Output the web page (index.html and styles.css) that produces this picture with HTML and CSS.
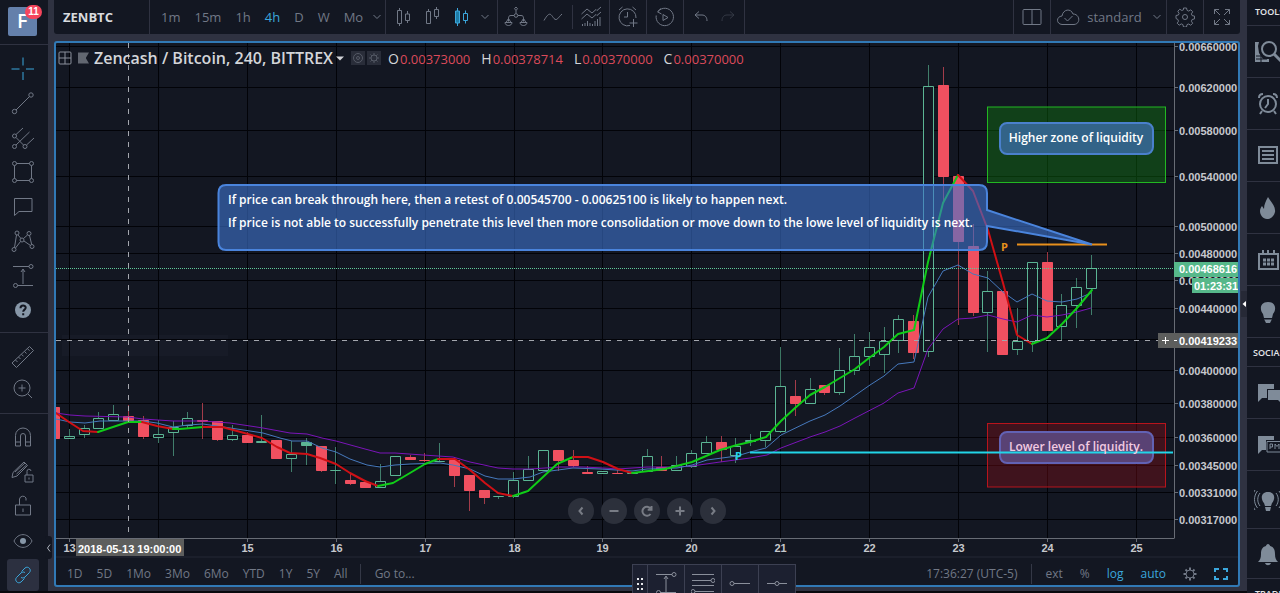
FILE: index.html
```html
<!DOCTYPE html>
<html lang="en">
<head>
<meta charset="utf-8">
<title>ZENBTC</title>
<link rel="stylesheet" href="styles.css">
</head>
<body>
<div class="app">
  <nav class="rail" aria-label="Drawing tools">
    <div class="rail-logo"><a class="logo" href="#">F</a><span class="badge">11</span></div>
    <div class="rail-group group-draw">
      <button class="tool active" aria-label="Crosshair"><svg class="ico" viewBox="0 0 24 24"><path d="M12 .5v8M12 15v8M.500 12h8M15 12h8"/></svg></button>
      <button class="tool" aria-label="Trend line"><svg class="ico" viewBox="0 0 24 24"><circle cx="3.500" cy="20.500" r="2.200"/><circle cx="20" cy="4" r="2.200"/><path d="M5 19L18.500 5.500"/></svg></button>
      <button class="tool" aria-label="Pitchfork"><svg class="ico" viewBox="0 0 24 24"><circle cx="3.500" cy="10" r="2"/><circle cx="3.500" cy="20.500" r="2"/><circle cx="14" cy="20.500" r="2"/><path d="M5 8.500L12 2M5 19L18.500 6M5 11.500l7.500 7.500M15.500 19L23 12"/></svg></button>
      <button class="tool" aria-label="Rectangle"><svg class="ico" viewBox="0 0 24 24"><circle cx="3.500" cy="3.500" r="2"/><circle cx="20.500" cy="3.500" r="2"/><circle cx="3.500" cy="20.500" r="2"/><circle cx="20.500" cy="20.500" r="2"/><path d="M5.500 3.500h13M5.500 20.500h13M3.500 5.500v13M20.500 5.500v13"/></svg></button>
      <button class="tool" aria-label="Text"><svg class="ico" viewBox="0 0 24 24"><path d="M3.500 3.500h17.500v13H8L3.500 20.500z"/></svg></button>
      <button class="tool" aria-label="Patterns"><svg class="ico" viewBox="0 0 24 24"><circle cx="6" cy="4" r="2"/><circle cx="18" cy="4.500" r="2"/><circle cx="11" cy="11" r="2"/><circle cx="3" cy="20.500" r="2"/><circle cx="21" cy="17.500" r="2"/><path d="M5.500 6L3.500 18.500M7 6l2.800 3.300M16.500 6L12.500 9.500M18.500 6.500l2.200 9M13 12l6.500 4.500M9.500 12.500L4.500 19"/></svg></button>
      <button class="tool" aria-label="Measure position"><svg class="ico" viewBox="0 0 24 24"><circle cx="20" cy="2.500" r="2"/><circle cx="4.500" cy="21.500" r="2"/><path d="M2 2.500h16M6.500 21.500H22M12 20V6M10 8l2-3 2 3"/></svg></button>
      <button class="tool" aria-label="Help"><svg class="ico" viewBox="0 0 24 24"><circle class="solid" cx="12" cy="12" r="8"/><path class="cut" d="M9.500 10.200c0-3.500 5.200-3.300 5.200-.4 0 1.800-2.500 1.900-2.500 3.900M12.200 15.200v2"/></svg></button>
    </div>
    <div class="rail-group group-measure">
      <button class="tool" aria-label="Ruler"><svg class="ico" viewBox="0 0 24 24"><path d="M1 18L18.500 1.500l4 4L5.500 22.500zM4.500 15l2 2M7.500 12l2 2M10.500 9.300l2 2M13.500 6.500l2 2M16.500 3.700l2 2"/></svg></button>
      <button class="tool" aria-label="Zoom in"><svg class="ico" viewBox="0 0 24 24"><circle cx="11" cy="11" r="8"/><path d="M17 17l4 4M11 7.500v7M7.500 11h7"/></svg></button>
    </div>
    <div class="rail-group group-lock">
      <button class="tool" aria-label="Magnet"><svg class="ico" viewBox="0 0 24 24"><path d="M4.500 21V10.500a7.500 7.500 0 0 1 15 0V21h-5V11a2.500 2.500 0 0 0-5 0v10zM4.500 17h5M14.500 17h5"/></svg></button>
      <button class="tool" aria-label="Stay in drawing mode"><svg class="ico" viewBox="0 0 24 24"><path d="M2 12.500L13 2l3.500 3.500L6 16l-5 1.500zM4 12l10-9M5.500 14l10-9M14 15h8v7h-8zM16 15v-3.500a2 2 0 0 1 4-.5M18 17.500v2"/></svg></button>
      <button class="tool" aria-label="Lock drawings"><svg class="ico" viewBox="0 0 24 24"><path d="M4.500 11h15v10h-15zM8.500 11V5a3.500 3.500 0 0 1 6.500-1v2.500M12 14.500v3.500"/></svg></button>
      <button class="tool" aria-label="Hide drawings"><svg class="ico" viewBox="0 0 24 24"><path d="M3 12c4-8.500 14-8.500 18 0-4 8.500-14 8.500-18 0z"/><circle class="solid" cx="12" cy="12" r="3"/></svg></button>
      <button class="tool pressed" aria-label="Sync drawings"><svg class="ico" viewBox="0 0 24 24"><path d="M10.500 8.500l3.500-3.500c3-2.500 7 1.500 4.500 4.500l-4.500 4.500c-1.300 1.300-3 1.300-4 .3M13.500 15.500L10 19c-3 2.500-7-1.500-4.500-4.500L10 10c1.300-1.300 3-1.300 4-.3"/></svg></button>
    </div>
    <button class="handle handle-left" aria-label="Collapse tools"><svg viewBox="0 0 6 10"><path d="M4 1.500L1.500 5 4 8.500"/></svg></button>
  </nav>

  <main class="main">
    <header class="topbar">
      <div class="seg seg-symbol"><button class="symbol">ZENBTC</button></div>
      <div class="seg seg-intervals">
        <button>1m</button><button>15m</button><button>1h</button><button class="on">4h</button><button>D</button><button>W</button><button>Mo</button>
        <button class="more" aria-label="More intervals"><svg class="chev" viewBox="0 0 8 6"><path d="M.5 1L4 4.500 7.500 1"/></svg></button>
      </div>
      <div class="seg seg-style">
        <button aria-label="Candles"><svg class="ico20" viewBox="0 0 20 20"><path d="M3.500 3.500h4v13h-4zM5.500 1v2.500M5.500 16.500V19M11.500 7h4v6.500h-4zM13.500 4v3M13.500 13.500V16"/></svg></button>
        <button aria-label="Hollow candles"><svg class="ico20" viewBox="0 0 20 20"><path d="M3.500 4.500h4v12h-4zM5.500 2v2.500M11.500 2.500h4v7h-4zM13.500 0v2.500M13.500 9.500V12"/></svg></button>
        <button class="on" aria-label="Filled candles"><svg class="ico20" viewBox="0 0 20 20"><path class="fill" d="M3.500 4h4v12h-4z"/><path d="M5.500 1v3M5.500 16v3M11.500 6.500h4v7h-4zM13.500 3.500v3M13.500 13.500v3"/></svg></button>
        <button aria-label="More styles"><svg class="chev" viewBox="0 0 8 6"><path d="M.5 1L4 4.500 7.500 1"/></svg></button>
      </div>
      <div class="seg"><button aria-label="Compare"><svg class="ico24" viewBox="0 0 24 24"><circle cx="12" cy="10.500" r="1.800"/><path d="M12 8.500V5.500M12 2l1.500 1.700L12 5.500l-1.500-1.800zM10 10.500H7c-2 0-2.500 1-2.500 3v3M14 10.500h3c2 0 2.500 1 2.500 3v3M1 17.500h7c0 4-7 4-7 0zM16 17.500h7c0 4-7 4-7 0zM4.500 13.500L2 17.500M4.500 13.500l2.500 4M19.500 13.500l-2.500 4M19.500 13.500l2.500 4"/></svg></button></div>
      <div class="seg seg-pair">
        <button aria-label="Line tool"><svg class="ico24" viewBox="0 0 24 24"><path d="M3 15.500C9 5 10 10 13 13.500c3 3 4-1 8-4.500"/></svg></button>
        <button aria-label="Indicators"><svg class="ico24" viewBox="0 0 24 24"><path d="M2.500 9L8 4l5 4 4-3.500 1 1L22 2M2.500 14L8 9l5 4 4-3.500 1 1L22 7M3.500 21v-2M6 21v-3M8.500 21v-5M11 21v-3M13.500 21v-2M16 21v-5M18.500 21v-7M21 21v-9"/></svg></button>
      </div>
      <div class="seg"><button aria-label="Alert"><svg class="ico24" viewBox="0 0 24 24"><path d="M14 20.500A8.500 8.500 0 1 1 20 13M11.500 7v5H8M3 5l3.500-3M16.500 2L20 5M17.500 14v8M13.500 18h8"/></svg></button></div>
      <div class="seg"><button aria-label="Replay"><svg class="ico24" viewBox="0 0 24 24"><path d="M5 6.500a8.700 8.700 0 1 1-1.800 4M8 3.500L4.500 6.800 8.500 9M10 9.500v6l5-3z"/></svg></button></div>
      <div class="seg seg-history">
        <button aria-label="Undo"><svg class="ico16" viewBox="0 0 16 16"><path d="M6 2.500L2 6l4 3.500M2 6h7c3 0 5 2 5 6"/></svg></button>
        <button class="dim" aria-label="Redo"><svg class="ico16" viewBox="0 0 16 16"><path d="M10 2.500L14 6l-4 3.500M14 6H7c-3 0-5 2-5 6"/></svg></button>
      </div>
      <div class="seg seg-fill"></div>
      <div class="seg"><button aria-label="Layout"><svg class="ico20" viewBox="0 0 20 20"><rect x="1" y="2.500" width="18" height="15" rx="1"/><path d="M10 2.500v15"/></svg></button></div>
      <div class="seg seg-layout">
        <button class="layout"><svg class="ico24" viewBox="0 0 24 24"><path d="M6 19.500c-6-.5-6-8 0-8.500C7 4 15 3 17 9c7 0 8 10 1 10.500zM8.500 13l3 3 5-5"/></svg><span>standard</span><svg class="chev" viewBox="0 0 8 6"><path d="M.5 1L4 4.500 7.500 1"/></svg></button>
      </div>
      <div class="seg"><button aria-label="Settings"><svg class="ico20" viewBox="0 0 20 20"><path d="M8.500 1h3l.6 2.400 1.600.7 2.100-1.300 1.900 2-1.300 2.100.7 1.700 2.400.5v2.800l-2.400.6-.7 1.700 1.300 2.100-2 1.900-2-1.200-1.700.6-.5 2.400h-3l-.6-2.400-1.600-.7-2.100 1.300-2-2 1.300-2-.6-1.700L1 11.500v-3l2.400-.5.7-1.600-1.300-2.200 2-2 2 1.300 1.700-.7z"/><circle cx="10" cy="10" r="2.500"/></svg></button></div>
      <div class="seg"><button aria-label="Full screen"><svg class="ico16" viewBox="0 0 16 16"><path d="M.5 5V.5H5M11 .5h4.500V5M15.500 11v4.500H11M5 15.500H.5V11M.5.5L6 6M15.500.5L10 6M15.500 15.500L10 10M.5 15.500L6 10"/></svg></button></div>
    </header>

    <section class="chart">
      <div class="pane">
        <svg class="plot" id="plot" viewBox="56 43 1182 515" role="img" aria-label="Zencash Bitcoin price chart">
          <rect class="mark" x="62" y="335" width="166" height="21"/>
          <g id="grid"></g>
          <g id="candles"></g>
          <g id="lines"></g>
          <path class="last" d="M56 268.500H1174"/>
          <path class="cross" d="M56 340.500H1158M128.500 43V538"/>
          <path class="orange" d="M1017 244.500H1107"/><text class="pivot pivot-o" x="1001" y="251">P</text>
          <rect class="zone zone-g" x="987.500" y="107" width="178" height="75.500"/>
          <rect class="zone zone-r" x="987.500" y="423.500" width="178" height="63.500"/>
          <rect class="tag tag-g" x="1000" y="123" width="153" height="31" rx="7"/>
          <rect class="tag tag-r" x="1000" y="432" width="153" height="31" rx="7"/>
          <path class="cyan" d="M750 452.500H1173"/><text class="pivot pivot-c" x="735" y="460">P</text>
          <text class="note" x="1076" y="142" text-anchor="middle">Higher zone of liquidity</text>
          <text class="note note-pink" x="1076" y="451" text-anchor="middle">Lower level of liquidity.</text>
          <path class="bubble" d="M226 185H979Q987 185 987 193V210L1092 244.500 987 226V242Q987 250 979 250H226Q218.500 250 218.500 242V193Q218.500 185 226 185Z"/>
          <text class="note" x="228" y="204">If price can break through here, then a retest of 0.00545700 - 0.00625100 is likely to happen next.</text>
          <text class="note" x="228" y="227">If price is not able to successfully penetrate this level then more consolidation or move down to the lowe level of liquidity is next.</text>
          <path class="axis" d="M1174.500 43V538.500M56 538.500H1174"/>
          <path class="axis-low" d="M56 557H1238"/>
          <g id="labels"></g>
          <rect class="now" x="1174" y="262" width="64" height="15"/><text class="axis-text hot" x="1179" y="273">0.00468616</text>
          <rect class="now" x="1192" y="278" width="46" height="15"/><text class="axis-text hot" x="1194" y="290">01:23:31</text>
          <rect class="cursor" x="1158" y="333" width="80" height="15"/><path class="plus" d="M1162 340.500h7M1165.500 337v7M1174 340.500h3"/><text class="axis-text hot" x="1179" y="345">0.00419233</text>
          <rect class="cursor" x="76" y="539" width="108" height="17"/><text class="axis-text hot" x="78" y="553">2018-05-13 19:00:00</text>
        </svg>
        <div class="legend">
          <button aria-label="Expand"><svg class="ico14" viewBox="0 0 14 14"><rect x="1" y="1" width="12" height="12" rx="1"/><path d="M7 1v12M1 7h12"/></svg></button>
          <svg class="flag" viewBox="0 0 12 12"><path d="M0 0h12L8.500 6 12 12H0z"/></svg>
          <button class="title">Zencash / Bitcoin, 240, BITTREX<svg class="caret" viewBox="0 0 8 5"><path d="M0 .5h8L4 4.500z"/></svg></button>
          <span class="legend-tools">
            <button aria-label="Hide"><svg viewBox="0 0 14 14"><circle cx="7" cy="7" r="4.500"/><circle cx="7" cy="7" r="1.500"/></svg></button>
            <button aria-label="Format"><svg viewBox="0 0 14 14"><circle cx="7" cy="7" r="3"/><path d="M7 2v2M7 10v2M2 7h2M10 7h2M3.500 3.500l1.300 1.300M9.200 9.200l1.300 1.300M3.500 10.500l1.300-1.300M9.200 4.800l1.300-1.300"/></svg></button>
          </span>
          <span class="ohlc"><span>O<b>0.00373000</b></span><span>H<b>0.00378714</b></span><span>L<b>0.00370000</b></span><span>C<b>0.00370000</b></span></span>
        </div>
        <div class="nav">
          <button aria-label="Scroll left"><svg viewBox="0 0 12 12"><path d="M7.500 2.500L4.500 6l3 3.500"/></svg></button>
          <button aria-label="Zoom out"><svg viewBox="0 0 12 12"><path d="M1.500 6h9"/></svg></button>
          <button aria-label="Reset"><svg viewBox="0 0 12 12"><path d="M9.500 9A4.500 4.500 0 1 1 9.500 3.500M10.500 1v3.800H6.700"/></svg></button>
          <button aria-label="Zoom in"><svg viewBox="0 0 12 12"><path d="M1.500 6h9M6 1.500v9"/></svg></button>
          <button aria-label="Scroll right"><svg viewBox="0 0 12 12"><path d="M4.500 2.500l3 3.500-3 3.500"/></svg></button>
        </div>
      </div>
      <footer class="range">
        <div class="range-left">
          <button>1D</button><button>5D</button><button>1Mo</button><button>3Mo</button><button>6Mo</button><button>YTD</button><button>1Y</button><button>5Y</button><button>All</button>
          <button class="goto">Go to...</button>
        </div>
        <div class="range-right">
          <button class="clock">17:36:27 (UTC-5)</button>
          <button>ext</button><button>%</button><button class="on">log</button><button class="on">auto</button>
          <button aria-label="Chart settings"><svg class="ico14" viewBox="0 0 14 14"><circle cx="7" cy="7" r="4"/><path class="thick" d="M7 .5V3M7 11v2.500M.5 7H3M11 7h2.500M2.500 2.500l1.600 1.600M9.900 9.900l1.600 1.600M2.500 11.500l1.600-1.600M9.900 4.100l1.600-1.600"/></svg></button>
          <button class="on" aria-label="Maximize"><svg class="ico14" viewBox="0 0 14 14"><path class="thick" d="M1 5V2h4M9 2h4v3M13 9v3H9M5 12H1V9"/></svg></button>
        </div>
      </footer>
    </section>
    <div class="strip"></div>
    <div class="floatbar">
      <span class="grip"><svg viewBox="0 0 8 14"><path d="M1 2h2M5 2h2M1 7h2M5 7h2M1 12h2M5 12h2"/></svg></span>
      <button aria-label="Position"><svg viewBox="0 0 24 22"><circle cx="20" cy="3.500" r="2"/><circle cx="4.500" cy="21.500" r="2"/><path d="M2 3.500h16M12 22V6M10 8l2-3 2 3M6 21.500h16"/></svg></button>
      <button aria-label="Channel"><svg viewBox="0 0 24 22"><circle cx="22" cy="9.500" r="2"/><circle cx="2" cy="20.500" r="2"/><path d="M1 3.500h22M1 9.500h19M1 14.500h22M4 20.500h19"/></svg></button>
      <button aria-label="Ray"><svg viewBox="0 0 24 22"><circle cx="4" cy="12.500" r="2"/><path d="M6 12.500h16"/></svg></button>
      <button aria-label="Horizontal line"><svg viewBox="0 0 24 22"><circle cx="12" cy="12.500" r="2"/><path d="M2 12.500h8M14 12.500h8"/></svg></button>
    </div>
  </main>

  <aside class="side">
    <button class="handle handle-right" aria-label="Open panel"><svg viewBox="0 0 6 8"><path d="M5 1v6L1.500 4z"/></svg></button>
    <h2>TOOLS</h2>
    <button aria-label="Screener"><svg viewBox="0 0 28 28"><path class="f" d="M1 4h4l-1 4 1 7 4 6h6v3H1z"/><path class="cut" d="M2 18h11M2 21h11M7 16v8"/><circle class="s2" cx="15" cy="11" r="7"/><path class="s3" d="M20 16l7 7"/></svg></button>
    <button aria-label="Alerts"><svg viewBox="0 0 28 28"><circle class="s2" cx="14" cy="14" r="8"/><path class="s2" d="M14 9v5l-3 4M5 8c0-3 2-4 4-4M23 8c0-3-2-4-4-4M8 21l-2 3M20 21l2 3"/></svg></button>
    <button aria-label="News"><svg viewBox="0 0 28 28"><path class="s2" d="M5 5h18v16H5zM8 9h12M8 13h12M8 17h12"/></svg></button>
    <button aria-label="Hotlists"><svg viewBox="0 0 28 28"><path class="f" d="M14 3c2 4 8 9 7 15-1 5-5 7-8 7-4 0-7-4-7-8 0-2 1-4 2-5l2 3c0-5 2-8 4-12z"/></svg></button>
    <button aria-label="Calendar"><svg viewBox="0 0 28 28"><path class="s2" d="M5 8h19v15H5zM9 4v5M14 4v5M20 4v5"/><path class="dots" d="M9 14h12M9 18h12"/></svg></button>
    <button aria-label="Ideas"><svg viewBox="0 0 28 28"><path class="f" d="M14 4c9 0 8 9 5 12l-1 4h-8l-1-4C6 13 5 4 14 4zM10 21h8l-2 4h-4z"/><path class="cut" d="M10 21h8"/></svg></button>
    <h2 class="h-social">SOCIAL</h2>
    <button aria-label="Chat"><svg viewBox="0 0 28 28"><path class="f" d="M4 5h16v5h-7v9H8l-4 4zM14 11h14v14l-4-4H14z"/></svg></button>
    <button aria-label="Messages"><svg viewBox="0 0 28 28"><path class="f" d="M4 5h16v4h-8v10H8l-4 4z"/><path class="s1" d="M13 10.500h15V21H13zM16 18v-5h2.500v3H16M21 18v-5l2 2.500 2-2.500v5"/></svg></button>
    <button class="tall" aria-label="Published ideas"><svg viewBox="0 0 28 28"><path class="f" d="M14 6c8 0 7 8 4 11l-1 3h-6l-1-3C7 14 6 6 14 6zM11 21h6l-1 4h-4z"/><path class="s1" d="M6 7c-3 4-3 9 0 13M3.500 5c-4 5-4 12 0 17M1 4c-4 6-4 14 0 20M22 7c3 4 3 9 0 13M25 5c4 5 4 12 0 17"/></svg></button>
    <button class="short" aria-label="Notifications"><svg viewBox="0 0 28 28"><path class="f" d="M14 4c1 0 2 1 2 2 4 1 5 4 5 8 0 4 1 6 3 8H4c2-2 3-4 3-8 0-4 1-7 5-8 0-1 1-2 2-2zM11 23h6c-1 3-5 3-6 0z"/></svg></button>
    <h2 class="h-trade">TRADE</h2>
  </aside>
</div>
<script src="chart.js"></script>
</body>
</html>
```
FILE: styles.css
```css
* { box-sizing: border-box; }
body {
  margin: 0;
  background: #2f3241;
  color: #717886;
  font-family: "Open Sans", "Noto Sans", sans-serif;
  overflow: hidden;
}
button {
  margin: 0;
  padding: 0;
  border: 0;
  background: none;
  color: inherit;
  font: inherit;
  display: flex;
  align-items: center;
  justify-content: center;
  white-space: nowrap;
}
svg { display: block; fill: none; stroke: currentColor; flex: none; }
.app { display: flex; gap: 6px; height: 100vh; }

/* left rail */
.rail { position: relative; width: 48px; background: #131722; display: flex; flex-direction: column; flex: none; }
.rail-logo { position: relative; height: 45px; padding: 7px 8px; border-bottom: 1px solid #2f3241; }
.logo {
  display: block; width: 29px; height: 29px; border-radius: 2px; background: #6480ab;
  color: #fff; font: 600 20px/28px "Open Sans", sans-serif; padding-left: 9px; text-decoration: none;
}
.badge {
  position: absolute; left: 25px; top: 5px; width: 17px; height: 14px; border-radius: 7px;
  background: #f5455c; color: #fff; font: bold 10px/14px "Liberation Sans", sans-serif; text-align: center;
}
.rail-group { display: grid; justify-content: center; align-content: space-between; border-bottom: 1px solid #2f3241; }
.group-draw { height: 288px; padding: 8px 0 6px; }
.group-measure { height: 81px; padding: 8px 0; }
.group-lock { height: 179px; padding: 7px 0 2px; border: 0; }
.tool { width: 32px; height: 32px; border-radius: 3px; margin-right: 2px; }
.active, .on { color: #3ba7dc; }
.pressed { background: #2c3040; color: #3ba7dc; }
.ico { width: 24px; height: 24px; }
.solid { fill: #8797a8; stroke: none; }
.cut { stroke: #131722; stroke-width: 2; }
.handle { position: absolute; z-index: 2; background: #131722; color: #aeb3bd; }
.handle svg { width: 6px; height: 10px; }
.handle-left { left: 45px; top: 536px; width: 7px; height: 23px; border-radius: 3px; }
.handle-right { left: -6px; top: 291px; width: 6px; height: 26px; background: #262936; }
.handle-right path { fill: #fff; stroke: none; }

/* top bar */
.main { flex: 1; min-width: 0; position: relative; display: flex; flex-direction: column; }
.topbar { display: flex; height: 34px; gap: 1px; border-radius: 0 0 3px 3px; overflow: hidden; font-size: 13px; flex: none; }
.seg { min-width: 36px; background: #131722; display: flex; align-items: center; justify-content: center; }
.seg-symbol { width: 95px; justify-content: flex-start; padding-left: 9px; }
.symbol { color: #d9dbdf; font-weight: 700; }
.seg-intervals { width: 235px; gap: 14px; justify-content: flex-start; padding-left: 11px; }
.more { margin-left: -4px; }
.seg-style { width: 111px; gap: 9px; }
.seg-style .fill { fill: #1f7ca6; }
.seg-pair { width: 74px; }
.seg-pair button { flex: 1; }
.seg-pair button + button { border-left: 1px solid #2f3241; }
.seg-history { width: 60px; gap: 11px; }
.dim { opacity: .35; }
.seg-fill { flex: 1; }
.seg-layout { width: 115px; }
.layout { gap: 7px; }
.layout .chev { margin-left: 4px; }
.ico24 { width: 24px; height: 24px; }
.ico20 { width: 20px; height: 20px; }
.ico16 { width: 16px; height: 16px; }
.ico14 { width: 14px; height: 14px; }
.chev { width: 8px; height: 6px; }

/* chart */
.chart { margin-top: 7px; border: 2px solid #3179b5; border-radius: 3px; background: #131722; overflow: hidden; flex: none; }
.pane { position: relative; }
.plot { width: 100%; height: auto; stroke: none; }
.mark { fill: #171b27; }
.grid { stroke: #020308; stroke-width: 1; }
.wick { stroke-width: 1; opacity: .65; }
.up { stroke: #5bb594; fill: #131722; }
.up-solid { stroke: #5bb594; fill: #5bb594; }
.down { stroke: #f05060; fill: #f05060; }
.ma { fill: none; stroke-linejoin: round; stroke-linecap: round; }
.ma-green { stroke: #10cc18; stroke-width: 2; }
.ma-red { stroke: #d01015; stroke-width: 2; }
.ma-blue { stroke: #4679bd; stroke-width: 1; }
.ma-purple { stroke: #7a14b8; stroke-width: 1; }
.last { stroke: #5fc99a; stroke-dasharray: 1 1; }
.cross { stroke: #a4a7ae; stroke-dasharray: 5 6; }
.orange { stroke: #e8901c; stroke-width: 2; }
.cyan { stroke: #22d5e8; stroke-width: 2; }
.pivot { font: bold 11px "Open Sans", sans-serif; }
.pivot-o { fill: #e8901c; }
.pivot-c { fill: #22d5e8; }
.zone-g { fill: #0f7a0f; fill-opacity: .42; stroke: #22b822; }
.zone-r { fill: #8a0c14; fill-opacity: .38; stroke: #b8141c; }
.tag { stroke-width: 2; }
.tag-g { fill: #326388; stroke: #4a80cc; }
.tag-r { fill: #594274; stroke: #6262b4; }
.bubble { fill: #4074d0; fill-opacity: .6; stroke: #4a84dc; stroke-width: 2; }
.note { font: 600 12px "Open Sans", "Noto Sans", sans-serif; fill: #fff; }
.note-pink { fill: #f3cbe2; }
.axis { stroke: #686c75; }
.axis-low { stroke: #242835; }
.axis-text { font: bold 11px "Liberation Sans", Arial, sans-serif; fill: #c6c8cd; }
.hot { fill: #fff; }
.now { fill: #56b88a; }
.cursor { fill: #5d5e5d; }
.plus { stroke: #fff; }

.legend { position: absolute; left: 2px; top: 4px; height: 22px; display: flex; align-items: center; color: #8b909b; }
.flag { width: 11px; height: 12px; margin: 0 5px 0 6px; }
.flag path { fill: #626771; stroke: none; }
.title { font-size: 16px; font-weight: 600; color: #d3d5d9; }
.caret { width: 8px; height: 5px; margin-left: 3px; }
.caret path { fill: #d3d5d9; stroke: none; }
.legend-tools { display: flex; gap: 2px; margin: 0 7px 0 7px; color: #555a66; }
.legend-tools button { background: #292d39; }
.legend-tools svg { width: 14px; height: 14px; }
.ohlc { display: flex; gap: 11px; color: #d3d5d9; font-size: 14px; }
.ohlc b { font-weight: 400; font-size: 13px; color: #dc4a5a; margin-left: 1px; }
.nav { position: absolute; left: 0; right: 0; bottom: 34px; display: flex; justify-content: center; gap: 7px; color: #787c85; }
.nav button { width: 26px; height: 26px; border-radius: 50%; background: #2c303b; }
.nav svg { width: 12px; height: 12px; stroke-width: 2; }

.range { height: 27px; display: flex; justify-content: space-between; align-items: center; font-size: 12px; padding: 4px 10px 0 11px; }
.range-left { display: flex; align-items: center; gap: 14px; }
.range-right { display: flex; align-items: center; gap: 17px; }
.goto { border-left: 1px solid #343846; padding-left: 14px; margin-left: -2px; height: 20px; }
.clock { border-right: 1px solid #343846; padding-right: 14px; margin-right: -4px; height: 20px; }
.thick { stroke-width: 2; }

.strip { height: 2px; margin: auto -54px 0; background: #08090d; }
.floatbar {
  position: absolute; left: 578px; bottom: 0; height: 29px; display: flex;
  background: #1c2030; border: 1px solid #3c4052; border-bottom: 0; overflow: hidden; color: #8a8f9b;
}
.floatbar button { width: 37px; height: 28px; align-items: flex-start; padding-top: 6px; border-left: 1px solid #3c4052; }
.floatbar button svg { width: 24px; height: 22px; }
.grip { width: 14px; padding: 12px 3px 0; color: #e4e6ea; }
.grip svg { width: 8px; height: 14px; stroke-width: 2; }

/* right panel */
.side { position: relative; width: 33px; margin-left: 1px; background: #131722; color: #7f8b99; flex: none; }
.side h2 {
  margin: 0; height: 26px; padding-left: 8px; border-bottom: 1px solid #2f3241; overflow: hidden;
  font: 600 9px/24px "Open Sans", sans-serif; color: #e4e6ea;
}
.side .h-social { height: 29px; line-height: 30px; padding-left: 6px; }
.side .h-trade { line-height: 30px; height: 14px; border: 0; }
.side > button:not(.handle) { width: 33px; height: 52px; padding-left: 7px; justify-content: flex-start; border-bottom: 1px solid #2f3241; overflow: hidden; }
.side > .tall:not(.handle) { height: 58px; }
.side > .short:not(.handle) { height: 50px; }
.side svg { width: 28px; height: 28px; }
.side .handle svg { width: 6px; height: 8px; }
.side .f { fill: currentColor; stroke: none; }
.side .s1 { stroke-width: 1; }
.side .s2 { stroke-width: 2; }
.side .s3 { stroke-width: 3; }
.side .cut { stroke-width: 1; }
.dots { stroke-width: 3; stroke-dasharray: 3 1; }
```
FILE: chart.js
```js
const NS = "http://www.w3.org/2000/svg";
function add(parent, name, attrs, text) {
  const el = document.createElementNS(NS, name);
  for (const key in attrs) el.setAttribute(key, attrs[key]);
  if (text) el.textContent = text;
  document.getElementById(parent).appendChild(el);
}

// axis position, label
const prices = [[47, "0.00660000"], [88, "0.00620000"], [131, "0.00580000"], [177, "0.00540000"], [227, "0.00500000"],
  [254, "0.00480000"], [281, "0.00460000"], [309, "0.00440000"], [340, ""], [371, "0.00400000"], [404, "0.00380000"],
  [438, "0.00360000"], [466, "0.00345000"], [493, "0.00331000"], [520, "0.00317000"]];
for (const [y, label] of prices) {
  add("grid", "path", { class: "grid", d: `M56 ${y - 0.5}H1174` });
  add("labels", "path", { class: "axis", d: `M1174 ${y - 0.5}h4` });
  add("labels", "text", { class: "axis-text", x: 1179, y: y + 4 }, label);
}
for (let i = 0; i < 13; i++) {
  const x = Math.round(69 + i * 88.9) + 0.5;
  add("grid", "path", { class: "grid", d: `M${x} 43V538` });
  add("labels", "path", { class: "axis", d: `M${x} 538v4` });
  if (i !== 1) add("labels", "text", { class: "axis-text", x: x, y: 552, "text-anchor": "middle" }, String(13 + i));
}

// kind (u hollow, s solid up, d down), body top, body bottom, wick top, wick bottom
const candles = [
  ["d",407,439,407,439],["u",436,438,429,438],["u",428,434,425,438],["u",418,428,412,428],["u",414,420,405,420],
  ["d",416,421,405,421],["d",420,437,416,439],["u",434,437,420,443],["u",427,432,421,456],["u",418,425,412,429],
  ["d",420,422,403,439],["d",421,440,421,441],["u",435,439,425,441],["d",435,443,432,443],["u",441,442,415,443],
  ["d",440,459,440,459],["u",454,458,441,472],["s",442,446,438,465],["d",446,471,446,472],["u",470,470,447,484],
  ["d",480,484,473,485],["d",482,488,480,488],["u",481,487,464,487],["u",456,475,456,475],["d",457,460,455,460],
  ["d",460,461,453,462],["u",461,461,443,462],["d",460,476,457,487],["d",475,491,475,511],["d",490,498,490,504],
  ["u",496,496,496,499],["u",480,496,472,498],["u",469,480,456,481],["u",450,470,450,470],["d",450,461,450,471],
  ["d",460,466,450,467],["d",472,474,466,474],["u",471,473,471,473],["d",473,474,468,474],["u",472,473,472,473],
  ["u",456,471,449,471],["d",467,471,456,471],["u",465,470,456,470],["u",453,466,450,468],["u",442,453,436,453],
  ["d",442,450,436,462],["u",446,455,438,463],["u",440,441,434,446],["u",431,440,431,447],["u",386,431,347,433],
  ["d",396,404,380,416],["u",389,403,378,403],["d",385,393,385,395],["u",370,392,348,395],["u",356,370,334,375],
  ["u",347,356,332,366],["u",341,354,327,373],["u",319,340,315,353],["d",321,353,315,359],["u",86,351,65,357],
  ["d",85,177,67,203],["d",176,242,176,325],["d",246,313,224,316],["u",291,312,271,352],["d",291,355,291,355],
  ["u",341,349,308,355],["u",262,341,262,352],["d",262,331,252,331],["u",305,326,294,341],["u",287,305,278,328],
  ["u",268,288,255,315]];
const kinds = { u: "up", s: "up-solid", d: "down" };
candles.forEach(([kind, top, bottom, high, low], i) => {
  const x = Math.round(54 + i * 14.815) + 0.5;
  add("candles", "path", { class: `wick ${kinds[kind]}`, d: `M${x} ${high}V${low}` });
  add("candles", "path", { class: kinds[kind], d: `M${x - 5} ${top + 0.5}h10V${kind === "u" ? bottom + 0.5 : bottom - 0.5}h-10z` });
});

const averages = [
  ["purple", "56,413 70,415 85,416 128,417 143,419 173,421 203,421 230,423 250,426 263,428 290,433 307,434 322,438 336,441 365,449 380,453 395,453 423,455 453,457 470,462 498,468 513,469 530,469 560,467 583,467 603,468 618,469 647,467 677,467 692,466 720,462 750,458 767,455 781,448 810,437 825,432 840,426 855,418 884,403 898,393 914,388 928,349 943,329 958,319 973,318 988,315 1003,319 1017,322 1032,315 1047,317 1062,315 1077,312 1091,308"],
  ["blue", "56,419 70,422 85,423 100,421 128,421 143,421 157,423 173,427 188,425 203,424 217,426 237,429 263,433 280,438 292,441 307,441 322,448 336,452 350,459 367,465 380,467 395,465 410,464 440,463 453,465 470,469 485,476 498,479 513,479 530,477 543,472 573,468 600,469 632,471 647,469 677,468 692,465 707,460 737,456 750,452 766,448 781,435 810,421 825,415 840,406 870,385 884,376 898,364 914,362 928,297 943,271 958,265 973,274 988,278 1003,292 1017,302 1032,294 1047,301 1062,302 1077,299 1091,293"],
  ["red", "56,413 69,422 83,431 98,432"],
  ["green", "98,432 128,422 142,422"],
  ["red", "142,422 157,426 173,429"],
  ["green", "173,429 180,429 203,427"],
  ["red", "203,427 222,427 237,431 262,438 277,447 290,453 307,454 320,458 336,464 350,473 365,481 378,486"],
  ["green", "378,486 393,483 410,473 425,464 438,459"],
  ["red", "438,459 455,459 470,470 485,483 498,493 513,496"],
  ["green", "513,496 528,491 543,477 557,464 573,457"],
  ["red", "573,457 588,457 603,462 618,469 632,473"],
  ["green", "632,473 665,469 692,462 720,450 737,445 750,442 766,437 781,421 795,408 810,395 825,387 840,378 855,369 869,358 884,347 898,334 914,330 928,262 943,203 958,175"],
  ["red", "958,175 973,191 988,230 1003,283 1017,335 1032,344"],
  ["green", "1032,344 1047,338 1062,324 1077,308 1092,290"]];
for (const [color, points] of averages) add("lines", "polyline", { class: `ma ma-${color}`, points });
```
